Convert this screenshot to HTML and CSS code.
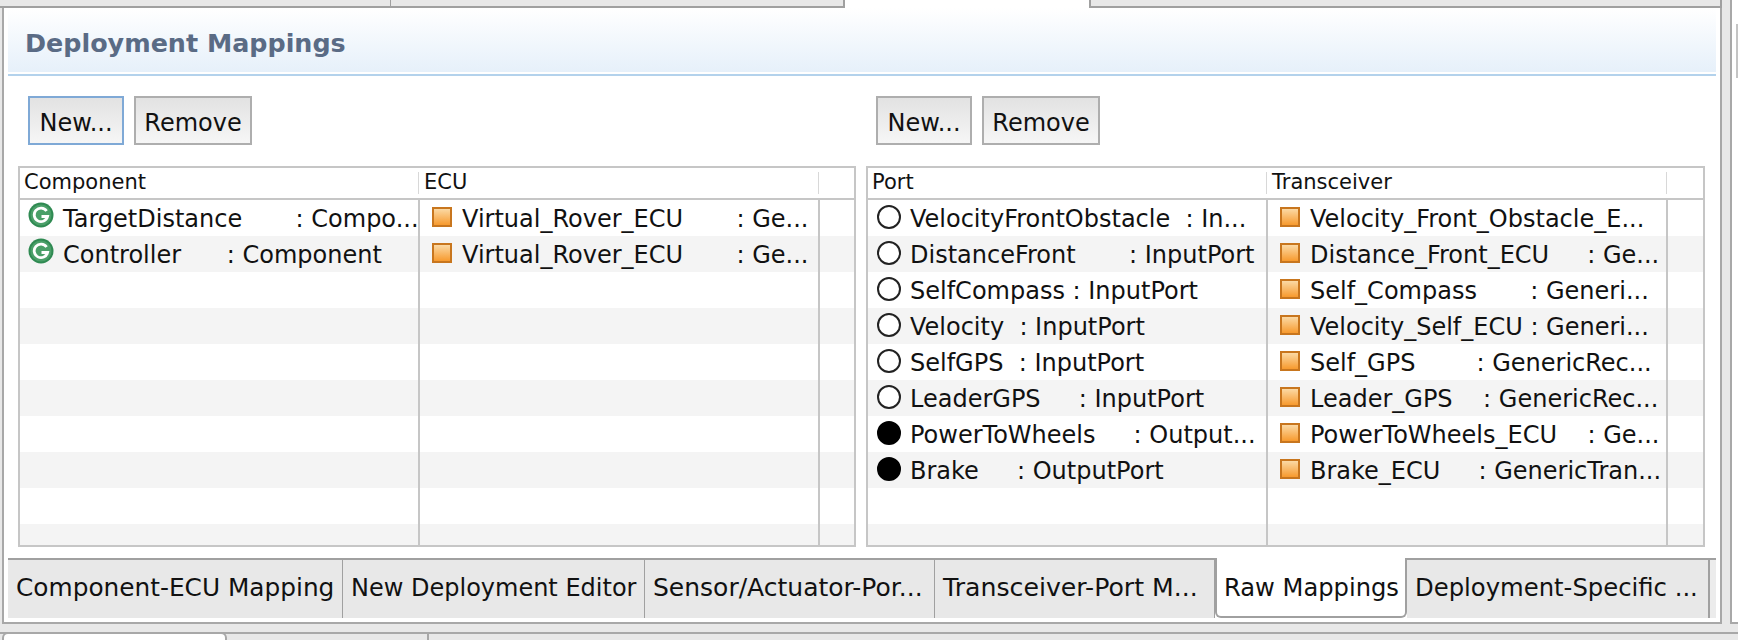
FILE: index.html
```html
<!DOCTYPE html>
<html lang="en">
<head>
    <meta charset="UTF-8">
    <title>Deployment Mappings</title>
    <link rel="stylesheet" href="styles.css">
</head>
<body>
<div class="columns">
    <div class="main">
        <div class="top-tabs">
            <div class="top-tab first"></div>
            <div class="top-tab second"></div>
            <div class="top-tab active"></div>
            <div class="top-tab rest"></div>
        </div>

        <div class="editor">
            <div class="section-title">Deployment Mappings</div>

            <div class="mappings">
                <div class="pane">
                    <div class="buttons">
                        <button class="btn focused">New...</button>
                        <button class="btn">Remove</button>
                    </div>
                    <div class="grid left-grid">
                        <table>
                            <thead>
                                <tr><th><span>Component</span></th><th><span>ECU</span></th><th><span></span></th></tr>
                            </thead>
                            <tbody>
                                <tr>
                                    <td><svg class="ico comp" viewBox="0 0 26 26"><circle cx="13" cy="13" r="12.5" fill="#2f8a52"/><circle cx="13" cy="13" r="10.5" fill="#4a9f68"/><path d="M18.6 9A6.8 6.8 0 1 0 19.6 14.5H13.5" fill="none" stroke="#fff" stroke-width="2.8"/></svg>TargetDistance       : Compo...</td>
                                    <td><i class="ico ecu"></i>Virtual_Rover_ECU       : Ge...</td>
                                    <td></td>
                                </tr>
                                <tr>
                                    <td><svg class="ico comp" viewBox="0 0 26 26"><circle cx="13" cy="13" r="12.5" fill="#2f8a52"/><circle cx="13" cy="13" r="10.5" fill="#4a9f68"/><path d="M18.6 9A6.8 6.8 0 1 0 19.6 14.5H13.5" fill="none" stroke="#fff" stroke-width="2.8"/></svg>Controller      : Component</td>
                                    <td><i class="ico ecu"></i>Virtual_Rover_ECU       : Ge...</td>
                                    <td></td>
                                </tr>
                                <tr><td></td><td></td><td></td></tr>
                                <tr><td></td><td></td><td></td></tr>
                                <tr><td></td><td></td><td></td></tr>
                                <tr><td></td><td></td><td></td></tr>
                                <tr><td></td><td></td><td></td></tr>
                                <tr><td></td><td></td><td></td></tr>
                                <tr><td></td><td></td><td></td></tr>
                                <tr><td></td><td></td><td></td></tr>
                            </tbody>
                        </table>
                    </div>
                </div>

                <div class="pane">
                    <div class="buttons">
                        <button class="btn">New...</button>
                        <button class="btn">Remove</button>
                    </div>
                    <div class="grid right-grid">
                        <table>
                            <thead>
                                <tr><th><span>Port</span></th><th><span>Transceiver</span></th><th><span></span></th></tr>
                            </thead>
                            <tbody>
                                <tr><td><i class="ico port"></i>VelocityFrontObstacle  : In...</td><td><i class="ico ecu"></i>Velocity_Front_Obstacle_E...</td><td></td></tr>
                                <tr><td><i class="ico port"></i>DistanceFront       : InputPort</td><td><i class="ico ecu"></i>Distance_Front_ECU     : Ge...</td><td></td></tr>
                                <tr><td><i class="ico port"></i>SelfCompass : InputPort</td><td><i class="ico ecu"></i>Self_Compass       : Generi...</td><td></td></tr>
                                <tr><td><i class="ico port"></i>Velocity  : InputPort</td><td><i class="ico ecu"></i>Velocity_Self_ECU : Generi...</td><td></td></tr>
                                <tr><td><i class="ico port"></i>SelfGPS  : InputPort</td><td><i class="ico ecu"></i>Self_GPS        : GenericRec...</td><td></td></tr>
                                <tr><td><i class="ico port"></i>LeaderGPS     : InputPort</td><td><i class="ico ecu"></i>Leader_GPS    : GenericRec...</td><td></td></tr>
                                <tr><td><i class="ico port out"></i>PowerToWheels     : Output...</td><td><i class="ico ecu"></i>PowerToWheels_ECU    : Ge...</td><td></td></tr>
                                <tr><td><i class="ico port out"></i>Brake     : OutputPort</td><td><i class="ico ecu"></i>Brake_ECU     : GenericTran...</td><td></td></tr>
                                <tr><td></td><td></td><td></td></tr>
                                <tr><td></td><td></td><td></td></tr>
                            </tbody>
                        </table>
                    </div>
                </div>
            </div>

            <div class="page-tabs">
                <div class="page-tab tab-a">Component-ECU Mapping</div>
                <div class="page-tab tab-b">New Deployment Editor</div>
                <div class="page-tab tab-c">Sensor/Actuator-Por...</div>
                <div class="page-tab tab-d">Transceiver-Port M...</div>
                <div class="page-tab tab-e">Raw Mappings</div>
                <div class="page-tab tab-f">Deployment-Specific ...</div>
                <div class="page-tab tab-end"></div>
            </div>
        </div>
    </div>

    <div class="side">
        <div class="side-panel">
            <div class="side-thumb"></div>
        </div>
    </div>
</div>

<div class="bottom-tabs">
    <div class="bottom-tab active"></div>
    <div class="bottom-tab second"></div>
</div>
</body>
</html>
```

FILE: styles.css
```css
html, body {
    margin: 0;
    height: 640px;
    overflow: hidden;
}
body {
    background: #e8e8e8;
    font-family: "DejaVu Sans", "Liberation Sans", sans-serif;
    font-size: 24px;
    color: #111;
}

.columns {
    display: flex;
    height: 624px;
}
.main {
    width: 1722px;
}

/* top strip */
.top-tabs {
    display: flex;
    height: 8px;
    background: #fff;
}
.top-tab {
    box-sizing: border-box;
    background: #e8e8e8;
    border-bottom: 2px solid #a0a0a0;
}
.top-tab.first { width: 391px; border-right: 1px solid #a0a0a0; }
.top-tab.second { width: 454px; border-right: 2px solid #a0a0a0; }
.top-tab.active { width: 244px; background: #fff; border-bottom: 0; }
.top-tab.rest { width: 633px; border-left: 2px solid #a0a0a0; border-right: 2px solid #a0a0a0; }

.editor {
    box-sizing: border-box;
    height: 616px;
    margin-left: 2px;
    background: #fff;
    border-left: 2px solid #a8a8a8;
    border-right: 2px solid #a8a8a8;
    border-bottom: 2px solid #a8a8a8;
    padding: 0 4px;
}

/* panel on the right */
.side {
    flex: 1;
    padding-left: 8px;
}
.side-panel {
    display: flex;
    justify-content: flex-end;
    box-sizing: border-box;
    height: 624px;
    padding-top: 24px;
    background: #fff;
    border-left: 2px solid #a8a8a8;
    border-bottom: 2px solid #a8a8a8;
}
.side-thumb {
    width: 2px;
    height: 54px;
    background: #c4c4c4;
}

/* section header */
.section-title {
    height: 64px;
    line-height: 71px;
    padding-left: 17px;
    font-size: 25.4px;
    font-weight: bold;
    color: #5a6b85;
    background: linear-gradient(#fff, #e6f0fa);
    border-bottom: 2px solid #fff;
    box-shadow: 0 2px 0 #b3d2ec;
}

.mappings {
    display: flex;
    padding: 22px 11px 0 10px;
    gap: 10px;
}
.pane {
    width: 838px;
}
.pane + .pane {
    width: 839px;
}
.buttons {
    display: flex;
    gap: 10px;
    padding-left: 10px;
    height: 49px;
}
.btn {
    box-sizing: border-box;
    height: 49px;
    padding: 5px 0 0;
    width: 96px;
    background: linear-gradient(#e2e2e2, #f6f6f6);
    border: 2px solid #aeaeae;
    font: 24px "DejaVu Sans", "Liberation Sans", sans-serif;
    color: #111;
}
.btn + .btn { width: 118px; }
.btn.focused { border-color: #7fa9d6; }

/* tables */
.grid {
    box-sizing: border-box;
    height: 381px;
    margin-top: 21px;
    border: 2px solid #c6c6c6;
    overflow: hidden;
}
.grid table {
    width: 100%;
    table-layout: fixed;
    border-collapse: collapse;
}
.left-grid th:nth-child(1) { width: 399px; }
.left-grid th:nth-child(2) { width: 400px; }
.right-grid th:nth-child(1) { width: 399px; }
.right-grid th:nth-child(2) { width: 400px; }
.grid th {
    height: 30px;
    padding: 0;
    text-align: left;
    font-weight: normal;
    font-size: 21px;
    border-bottom: 2px solid #c6c6c6;
    vertical-align: middle;
}
.grid th span {
    display: block;
    height: 22px;
    line-height: 20px;
    padding-left: 4px;
    border-right: 1px solid #d8d8d8;
}
.grid th + th span { padding-left: 5px; }
.grid th:last-child span { border-right: 0; }
.grid td {
    height: 34px;
    padding: 2px 0 0 12px;
    white-space: pre;
    overflow: hidden;
    border-right: 2px solid #c6c6c6;
}
.grid td:last-child { border-right: 0; }
.grid tbody tr:nth-child(even) { background: #f4f4f4; }

.ico {
    display: inline-block;
    vertical-align: middle;
    margin-right: 10px;
}
.ico.comp {
    width: 26px;
    height: 26px;
    margin: -10px 9px 0 -4px;
}
.ico.ecu {
    box-sizing: border-box;
    width: 20px;
    height: 20px;
    margin-top: -6px;
    border: 2px solid #c8761e;
    background: linear-gradient(#fbd9a4, #f79a2e);
}
.ico.port {
    box-sizing: border-box;
    width: 24px;
    height: 24px;
    margin: -6px 9px 0 -3px;
    border: 2px solid #222;
    border-radius: 50%;
    background: #fff;
}
.ico.port.out { background: #000; border-color: #000; }

/* bottom tabs of the editor */
.page-tabs {
    display: flex;
    height: 60px;
    margin-top: 11px;
}
.page-tab {
    box-sizing: border-box;
    height: 60px;
    line-height: 56px;
    padding-left: 8px;
    white-space: nowrap;
    overflow: hidden;
    background: #e8e8e8;
    border-top: 2px solid #a0a0a0;
    border-right: 1px solid #a0a0a0;
}
/* label widths differ a little from the original UI font */
.tab-a { width: 335px; font-size: 24.8px; }
.tab-b { width: 302px; font-size: 24px; }
.tab-c { width: 290px; font-size: 25px; }
.tab-d { width: 280px; font-size: 25.2px; }
.tab-e {
    width: 192px;
    padding: 2px 0 0 7px;
    font-size: 24.2px;
    background: #fff;
    border: 2px solid #a0a0a0;
    border-top: 0;
    border-radius: 0 0 6px 6px;
}
.tab-f { width: 303px; font-size: 24.3px; border-right: 2px solid #a0a0a0; }
.tab-end { flex: 1; padding: 0; background: #ececec; border-right: 0; }

.bottom-tabs {
    display: flex;
    height: 8px;
    margin-top: 8px;
    border-top: 2px solid #a8a8a8;
}
.bottom-tab {
    box-sizing: border-box;
    height: 6px;
}
.bottom-tab.active {
    width: 225px;
    margin-left: 2px;
    margin-top: -2px;
    height: 8px;
    background: #fff;
    border: 2px solid #a8a8a8;
    border-bottom: 0;
    border-radius: 6px 6px 0 0;
}
.bottom-tab.second {
    width: 202px;
    border-right: 2px solid #a8a8a8;
}
```
